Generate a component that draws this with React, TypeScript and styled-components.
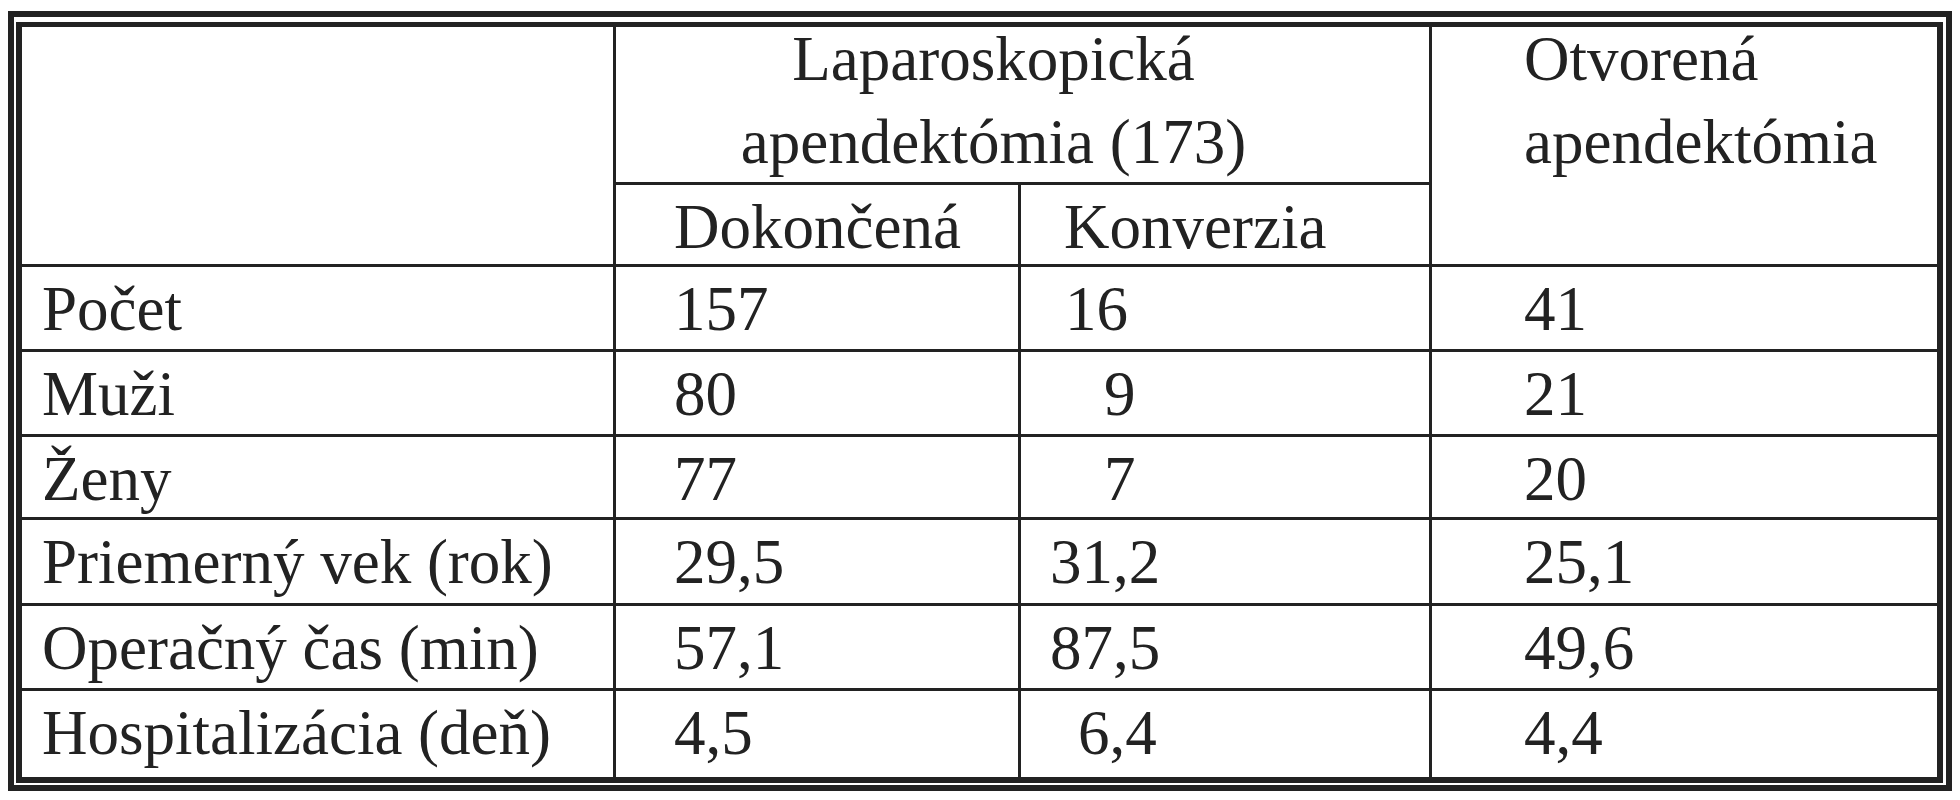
import React from 'react';
import styled, { createGlobalStyle } from 'styled-components';

const GlobalStyle = createGlobalStyle`
  html, body {
    margin: 0;
    padding: 0;
    background: #fff;
  }
  body {
    font-family: 'Liberation Serif', 'Times New Roman', serif;
    color: #222;
  }
`;

const Frame = styled.div`
  box-sizing: border-box;
  width: 1944px;
  height: 780px;
  margin: 11px 0 0 8px;
  border: 6px solid #222;
  padding: 5px 3px 2px 2px;
`;

const InnerFrame = styled.div`
  box-sizing: border-box;
  height: 100%;
  border: 6px solid #222;
  border-top-width: 5px;
`;

const Table = styled.div`
  display: grid;
  grid-template-columns: 591px 402px 408px 505px;
  grid-template-rows: 155px 79px 82px 82px 80px 83px 82px 86px;
  gap: 3px;
  height: 100%;
  background: #222;
`;

const Cell = styled.div<{ $indent: number; $col?: string; $row?: string }>`
  background: #fff;
  padding: 11px 0 0 ${(p) => p.$indent}px;
  font-size: 63px;
  line-height: 62px;
  white-space: pre;
  ${(p) => (p.$col ? `grid-column: ${p.$col};` : '')}
  ${(p) => (p.$row ? `grid-row: ${p.$row};` : '')}
`;

const HeadStack = styled.div<{ $indent: number; $center?: boolean; $col: string; $row: string }>`
  background: #fff;
  grid-column: ${(p) => p.$col};
  grid-row: ${(p) => p.$row};
  display: flex;
  flex-direction: column;
  align-items: ${(p) => (p.$center ? 'center' : 'flex-start')};
  gap: 21px;
  padding: 1px ${(p) => (p.$center ? 58 : 0)}px 0 ${(p) => p.$indent}px;
  font-size: 63px;
  line-height: 62px;
  white-space: nowrap;
`;

type Row = {
  label: string;
  done: string;
  conv: string;
  convIndent: number;
  open: string;
};

const rows: Row[] = [
  { label: 'Počet', done: '157', conv: '16', convIndent: 44, open: '41' },
  { label: 'Muži', done: '80', conv: '9', convIndent: 83, open: '21' },
  { label: 'Ženy', done: '77', conv: '7', convIndent: 83, open: '20' },
  { label: 'Priemerný vek (rok)', done: '29,5', conv: '31,2', convIndent: 29, open: '25,1' },
  { label: 'Operačný čas (min)', done: '57,1', conv: '87,5', convIndent: 29, open: '49,6' },
  { label: 'Hospitalizácia (deň)', done: '4,5', conv: '6,4', convIndent: 57, open: '4,4' },
];

export default function App() {
  return (
    <>
      <GlobalStyle />
      <Frame>
        <InnerFrame>
          <Table>
            <Cell $indent={20} $col="1" $row="1 / span 2" />
            <HeadStack $indent={0} $center $col="2 / span 2" $row="1">
              <span>Laparoskopická</span>
              <span>apendektómia (173)</span>
            </HeadStack>
            <HeadStack $indent={92} $col="4" $row="1 / span 2">
              <span>Otvorená</span>
              <span>apendektómia</span>
            </HeadStack>
            <Cell $indent={58} $col="2" $row="2">
              Dokončená
            </Cell>
            <Cell $indent={43} $col="3" $row="2">
              Konverzia
            </Cell>
            {rows.map((r) => (
              <React.Fragment key={r.label}>
                <Cell $indent={20}>{r.label}</Cell>
                <Cell $indent={58}>{r.done}</Cell>
                <Cell $indent={r.convIndent}>{r.conv}</Cell>
                <Cell $indent={92}>{r.open}</Cell>
              </React.Fragment>
            ))}
          </Table>
        </InnerFrame>
      </Frame>
    </>
  );
}
